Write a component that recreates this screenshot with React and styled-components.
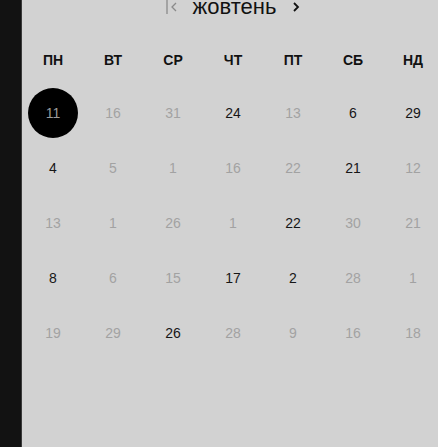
import React from 'react';
import styled, { createGlobalStyle } from 'styled-components';

const GlobalStyle = createGlobalStyle`
  html, body {
    margin: 0;
    padding: 0;
    background: #d2d2d2;
    overflow: hidden;
  }
  body {
    font-family: "Liberation Sans", Arial, sans-serif;
  }
`;

const Screen = styled.div`
  display: flex;
  width: 438px;
  height: 447px;
  overflow: hidden;
`;

const Sidebar = styled.div`
  flex: 0 0 21px;
  background: #121212;
  border-right: 1px solid #3a3a3a;
`;

const Panel = styled.div`
  flex: 1;
  background: #d2d2d2;
  padding-left: 1px;
  overflow: hidden;
`;

const Calendar = styled.div`
  width: 420px;
  display: flex;
  flex-direction: column;
`;

const Header = styled.div`
  display: flex;
  align-items: center;
  justify-content: center;
  height: 22px;
  margin-top: -4px;
  margin-bottom: 22px;
`;

const NavButton = styled.button`
  display: flex;
  align-items: center;
  justify-content: center;
  background: none;
  border: none;
  padding: 0;
  margin: ${(p) => p.$margin};
  color: ${(p) => p.$color};
  cursor: pointer;
`;

const Title = styled.span`
  font-size: 22px;
  line-height: 22px;
  color: #111;
  margin-left: 2px;
`;

const Grid = styled.div`
  display: grid;
  grid-template-columns: repeat(7, 60px);
  grid-auto-rows: ${(p) => p.$rowHeight}px;
  margin-top: ${(p) => p.$offset || 0}px;
`;

const WeekDay = styled.div`
  display: flex;
  align-items: center;
  justify-content: center;
  font-size: 14px;
  font-weight: bold;
  color: #111;
`;

const Day = styled.div`
  display: flex;
  align-items: center;
  justify-content: center;
  font-size: 14px;
  color: ${(p) => (p.$muted ? '#a2a2a2' : '#161616')};
`;

const Selected = styled.span`
  display: flex;
  align-items: center;
  justify-content: center;
  width: 50px;
  height: 50px;
  border-radius: 50%;
  background: #000;
  color: #9a9a9a;
`;

const weekDays = ['ПН', 'ВТ', 'СР', 'ЧТ', 'ПТ', 'СБ', 'НД'];

// [day, muted, selected]
const weeks = [
  [[11, 0, 1], [16, 1], [31, 1], [24, 0], [13, 1], [6, 0], [29, 0]],
  [[4, 0], [5, 1], [1, 1], [16, 1], [22, 1], [21, 0], [12, 1]],
  [[13, 1], [1, 1], [26, 1], [1, 1], [22, 0], [30, 1], [21, 1]],
  [[8, 0], [6, 1], [15, 1], [17, 0], [2, 0], [28, 1], [1, 1]],
  [[19, 1], [29, 1], [26, 0], [28, 1], [9, 1], [16, 1], [18, 1]],
];

const FirstIcon = () => (
  <svg width="12" height="14" viewBox="0 0 12 14" fill="none" stroke="currentColor" strokeWidth="1.3">
    <line x1="1" y1="0" x2="1" y2="14" />
    <polyline points="10,3 6,7 10,11" />
  </svg>
);

const NextIcon = () => (
  <svg width="8" height="12" viewBox="0 0 8 12" fill="none" stroke="currentColor" strokeWidth="1.8">
    <polyline points="2,2 6,6 2,10" />
  </svg>
);

export default function App() {
  return (
    <>
      <GlobalStyle />
      <Screen>
        <Sidebar />
        <Panel>
          <Calendar>
            <Header>
              <NavButton $color="#8a8a8a" $margin="0 13px 0 0">
                <FirstIcon />
              </NavButton>
              <Title>жовтень</Title>
              <NavButton $color="#111" $margin="0 0 0 16px">
                <NextIcon />
              </NavButton>
            </Header>
            <Grid $rowHeight={40}>
              {weekDays.map((d) => (
                <WeekDay key={d}>{d}</WeekDay>
              ))}
            </Grid>
            <Grid $rowHeight={55} $offset={5}>
              {weeks.flat().map(([n, muted, sel], i) => (
                <Day key={i} $muted={!!muted}>
                  {sel ? <Selected>{n}</Selected> : n}
                </Day>
              ))}
            </Grid>
          </Calendar>
        </Panel>
      </Screen>
    </>
  );
}
